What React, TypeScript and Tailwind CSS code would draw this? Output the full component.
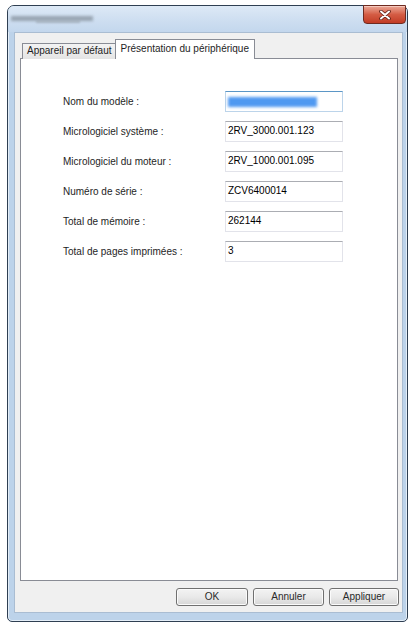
import React from "react";

const rows: { label: string; value: string; focus?: boolean }[] = [
  { label: "Nom du modèle :", value: "", focus: true },
  { label: "Micrologiciel système :", value: "2RV_3000.001.123" },
  { label: "Micrologiciel du moteur :", value: "2RV_1000.001.095" },
  { label: "Numéro de série :", value: "ZCV6400014" },
  { label: "Total de mémoire :", value: "262144" },
  { label: "Total de pages imprimées :", value: "3" },
];

function Btn({ label, w }: { label: string; w: string }) {
  return (
    <div
      className={`${w} h-[18px] rounded-[3px] border border-[#707070] bg-gradient-to-b from-[#f3f3f3] via-[#e9e9e9] to-[#d6d6d6] flex items-center justify-center text-[#2a2a2a] shadow-[inset_0_0_0_1px_#fbfbfb]`}
    >
      {label}
    </div>
  );
}

export default function App() {
  return (
    <div className="w-[412px] h-[623px] bg-white pt-[5px] pl-[7px] font-['Liberation_Sans',Arial,sans-serif] text-[10px] leading-none">
      <div className="w-[401px] h-[617px] rounded-t-[7px] rounded-b-[5px] border border-[#2f3f52] bg-[#bdd3ea] flex flex-col shadow-[inset_0_0_0_1px_#e4eef8]">
        {/* title bar */}
        <div className="relative h-[26px] shrink-0 rounded-t-[6px] bg-gradient-to-b from-[#dde9f6] via-[#cfdff1] to-[#c3d7ed]">
          <div className="absolute left-[3px] top-[10px] w-[82px] h-[5px] bg-[#8a96a2] blur-[1.5px] opacity-80" />
          <div className="absolute left-[28px] top-[14px] w-[44px] h-[3px] bg-[#9eaab5] blur-[1px] opacity-70" />
          <div className="absolute right-[1px] top-[-1px] w-[43px] h-[19px] rounded-b-[4px] border border-[#6e2a20] bg-gradient-to-b from-[#eaa898] via-[#d45c44] to-[#c23b24] flex items-center justify-center shadow-[inset_0_1px_0_#f6c8bc]">
            <svg width="12" height="10" viewBox="0 0 12 10">
              <path
                d="M2 1.5 L10 8.5 M10 1.5 L2 8.5"
                stroke="#5a1e16"
                strokeWidth="3.6"
                strokeLinecap="round"
              />
              <path
                d="M2 1.5 L10 8.5 M10 1.5 L2 8.5"
                stroke="#ffffff"
                strokeWidth="2"
                strokeLinecap="round"
              />
            </svg>
          </div>
        </div>
        {/* client area */}
        <div className="ml-[6px] mr-[4px] mb-[8px] flex-1 bg-[#f0f0f0] border border-[#aabdd2] flex flex-col">
          {/* tabs */}
          <div className="mt-[6px] ml-[6px] h-[19px] flex items-end relative z-10 whitespace-nowrap">
            <div className="ml-[1px] h-[16px] px-[4px] border border-[#898c95] border-b-0 bg-gradient-to-b from-[#f3f3f3] to-[#e4e4e4] flex items-center text-[#1e1e1e] mb-[-1px] pb-px">
              Appareil par défaut
            </div>
            <div className="ml-[-2px] h-[20px] px-[5px] border border-[#898c95] border-b-0 bg-white flex items-start pt-[4px] text-[#1e1e1e] mb-[-1px]">
              Présentation du périphérique
            </div>
          </div>
          {/* panel */}
          <div className="ml-[5px] mr-[4px] h-[523px] border border-[#898c95] bg-white pt-[32px] pl-[42px] flex flex-col gap-[9px]">
            {rows.map((r) => (
              <div key={r.label} className="flex items-center h-[21px]">
                <div className="w-[162px] text-[#1e1e1e]">{r.label}</div>
                <div
                  className={`w-[118px] h-[21px] border ${
                    r.focus
                      ? "border-[#bcd4ea] border-t-[#5b96c6]"
                      : "border-[#e2e3ea] border-t-[#abadb3]"
                  } bg-white flex items-center pl-[2px] pb-[2px] text-black`}
                >
                  {r.focus ? (
                    <div className="w-[89px] h-[10px] mt-[2px] bg-[#3d8ef0] blur-[1.5px] opacity-90" />
                  ) : (
                    r.value
                  )}
                </div>
              </div>
            ))}
          </div>
          {/* buttons */}
          <div className="mt-[7px] mr-[3px] flex justify-end gap-[5px]">
            <Btn label="OK" w="w-[72px]" />
            <Btn label="Annuler" w="w-[71px]" />
            <Btn label="Appliquer" w="w-[70px]" />
          </div>
        </div>
      </div>
    </div>
  );
}
